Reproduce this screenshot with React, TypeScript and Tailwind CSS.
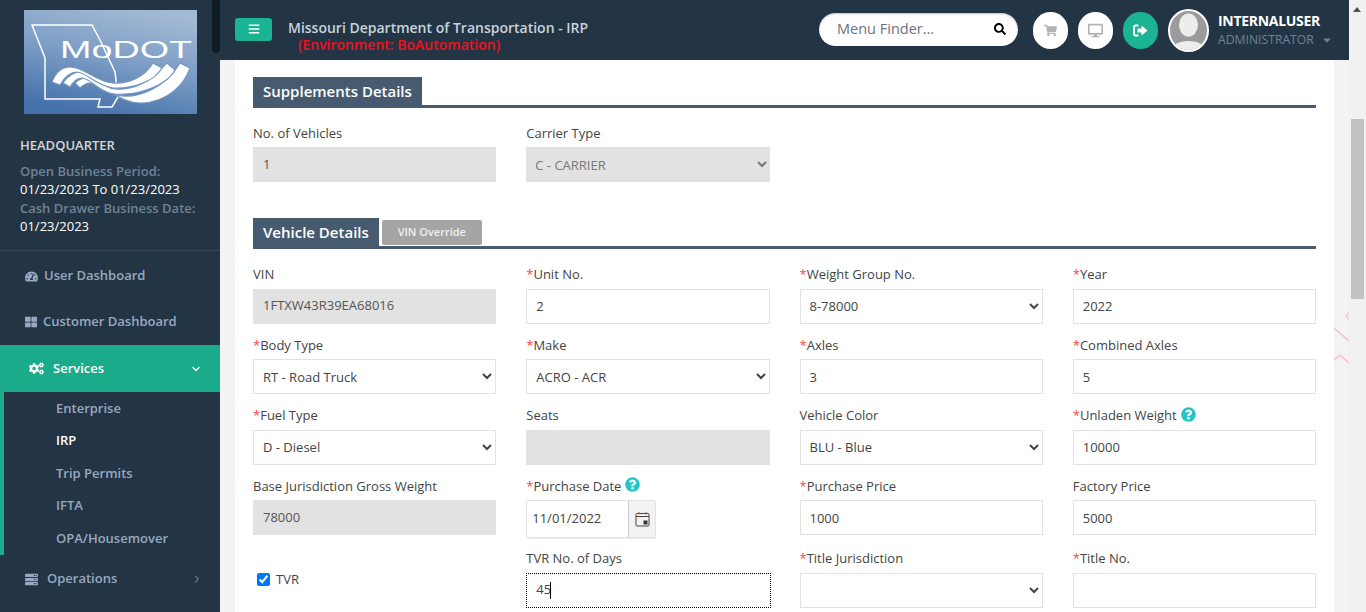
import React from "react";
import { FaBars, FaCaretDown, FaCogs, FaDesktop, FaQuestionCircle, FaSearch, FaServer, FaShoppingCart, FaTachometerAlt, FaThLarge } from "react-icons/fa";
import { ChevronDown, ChevronRight } from "lucide-react";

const font = { fontFamily: '"Open Sans", sans-serif' };

function Logo() {
  const gap = { stroke: "#7295c0", strokeWidth: 1.1 };
  return (
    <svg width="173" height="104" viewBox="0 0 173 104" className="block">
      <defs>
        <linearGradient id="lg" x1="0.75" y1="0" x2="0.4" y2="1">
          <stop offset="0" stopColor="#a3bad4" />
          <stop offset="0.5" stopColor="#7c9dc5" />
          <stop offset="1" stopColor="#4672ab" />
        </linearGradient>
      </defs>
      <rect width="173" height="104" fill="url(#lg)" />
      <path d="M8 15 H68 L76 30 L91 62 L94 87 L88 97 H74 L76 89 H21 V48 Z" fill="none" stroke="#fff" strokeWidth="1.5" />
      <text x="36" y="48" fill="#fff" fontFamily="Liberation Sans, sans-serif" fontSize="24" textLength="132" lengthAdjust="spacingAndGlyphs">MoDOT</text>
      <path d="M51 73 C54 70 58 68 63 68 C72 68 80 84 93 85 C112 90 142 78 156 53 L166 58 C160 76 142 92 118 93 C96 94 78 73 66 73 C62 73 59 75 56 78 Z" fill="#fff" {...gap} />
      <path d="M39 73 C44 66 50 62 56 62 C68 62 78 78 91 79 C110 81 126 72 143 53 L151 60 C144 74 116 86 91 84 C76 83 66 68 58 68 C53 68 49 72 46 77 Z" fill="#fff" {...gap} />
      <path d="M28 72 C32 62 38 57 46 57 C60 57 72 72 89 73 C104 74 120 68 129 53 L138 58 C130 72 108 79 89 78 C72 76 62 62 53 62 C46 62 40 68 36 75 Z" fill="#fff" {...gap} />
    </svg>
  );
}

function Avatar() {
  return (
    <svg width="41" height="43" viewBox="0 0 41 43" className="block">
      <defs>
        <clipPath id="av"><ellipse cx="20.5" cy="21.5" rx="18.5" ry="19.5" /></clipPath>
      </defs>
      <ellipse cx="20.5" cy="21.5" rx="19.5" ry="20.5" fill="#9b9b9b" stroke="#fff" strokeWidth="2" />
      <g clipPath="url(#av)">
        <ellipse cx="20.5" cy="16" rx="9.5" ry="11.5" fill="#ededed" />
        <ellipse cx="20.5" cy="42" rx="18" ry="10" fill="#ededed" />
      </g>
    </svg>
  );
}

function SignOutIcon() {
  return (
    <svg width="15" height="13" viewBox="0 0 15 13" fill="#fff" className="block">
      <path d="M5.5 0.5 H2.5 C1 0.5 0 1.5 0 3 V10 C0 11.5 1 12.5 2.5 12.5 H5.5 V10.5 H3 C2.4 10.5 2 10.1 2 9.5 V3.5 C2 2.9 2.4 2.5 3 2.5 H5.5 Z" />
      <path d="M4.5 4.5 H8.5 V1.5 L14.5 6.5 L8.5 11.5 V8.5 H4.5 Z" />
    </svg>
  );
}

function CalendarIcon() {
  return (
    <svg width="15" height="16" viewBox="0 0 15 16" fill="none" className="block">
      <rect x="1" y="2.5" width="13" height="12.5" rx="1" stroke="#444" strokeWidth="1" />
      <path d="M1 5.5 H14" stroke="#444" strokeWidth="1" />
      <path d="M4 1 V3.5 M11 1 V3.5" stroke="#a06a2c" strokeWidth="1" />
      <rect x="8.5" y="9.5" width="4" height="4" fill="#333" />
    </svg>
  );
}

const inputBase = "w-full h-[35px] border border-[#e2e2e2] bg-white px-[9px] text-[13px] text-[#444] outline-none";
const disabledBase = "w-full h-[35px] bg-[#e2e2e2] px-[10px] flex items-center text-[13px] text-[#555]";

function Label({ text, req, help }: { text: string; req?: boolean; help?: boolean }) {
  return (
    <div className="h-[20px] mb-[4.5px] flex items-center text-[13px] leading-[20px] text-[#444]">
      {req && <span className="text-[#f44]">*</span>}
      <span>{text}</span>
      {help && <FaQuestionCircle className="ml-[4px] -mt-[2px] text-[15px] text-[#23c6c8]" />}
    </div>
  );
}

function Field({ label, req, help, value, kind = "input", className = "" }: { label: string; req?: boolean; help?: boolean; value: string; kind?: "input" | "select" | "disabled"; className?: string }) {
  return (
    <div className={"pt-[11px] " + className}>
      <Label text={label} req={req} help={help} />
      {kind === "disabled" && <div className={disabledBase}>{value}</div>}
      {kind === "input" && <input readOnly value={value} className={inputBase} />}
      {kind === "select" && (
        <select defaultValue={value} className="w-full h-[35px] border border-[#e2e2e2] bg-white px-[5px] text-[13px] text-[#444] outline-none">
          <option>{value}</option>
        </select>
      )}
    </div>
  );
}

function SectionTitle({ title, children }: { title: string; children?: React.ReactNode }) {
  return (
    <div className="flex items-end border-b-[3px] border-[#475b70] h-[31px]">
      <div className="h-[28px] px-[10px] pt-[1px] flex items-center bg-[#475b70] text-white text-[15px] font-semibold">{title}</div>
      {children}
    </div>
  );
}

function NavItem({ icon, label, gap, chevron }: { icon: React.ReactNode; label: string; gap: string; chevron?: boolean }) {
  return (
    <div className="h-[46px] flex items-center pl-[25px] pr-[17px] text-[13px] font-semibold text-[#98a8c0]">
      <span className={"flex " + gap}>{icon}</span>
      <span>{label}</span>
      {chevron && <ChevronRight size={12} strokeWidth={2} className="ml-auto" />}
    </div>
  );
}

function SubItem({ label, active }: { label: string; active?: boolean }) {
  return (
    <div className={"h-[32.5px] flex items-center pl-[52px] text-[13px] font-semibold " + (active ? "text-white" : "text-[#98a8c0]")}>{label}</div>
  );
}

export default function App() {
  return (
    <div style={font} className="relative flex w-[1366px] h-[612px] overflow-hidden bg-[#f3f3f3]">
      <aside className="relative w-[220px] shrink-0 h-full bg-[#233545] overflow-hidden">
        <div className="pt-[10px] pl-[24px]"><Logo /></div>
        <div className="px-[20px] pt-[18.5px] h-[137px] border-b border-[#34475a] text-[13px] leading-[18.5px]">
          <div className="font-semibold text-[#d6d6d6] h-[26px] flex items-center mb-[3px] text-[13px]">HEADQUARTER</div>
          <div className="font-semibold text-[#6f8296]">Open Business Period:</div>
          <div className="text-white">01/23/2023 To 01/23/2023</div>
          <div className="font-semibold text-[#6f8296]">Cash Drawer Business Date:</div>
          <div className="text-white">01/23/2023</div>
        </div>
        <div className="mt-[2px]">
          <NavItem icon={<FaTachometerAlt className="text-[13px]" />} label="User Dashboard" gap="mr-[6px]" />
          <NavItem icon={<FaThLarge className="text-[12px]" />} label="Customer Dashboard" gap="mr-[6px]" />
        </div>
        <div className="h-[47px] flex items-center pl-[29px] pr-[18px] bg-[#1aab8b] text-white text-[13px] font-semibold">
          <FaCogs className="text-[15px] mr-[9px]" />
          <span>Services</span>
          <ChevronDown size={12} strokeWidth={2.5} className="ml-auto" />
        </div>
        <div className="border-l-[4px] border-[#1aab8b] h-[163px]">
          <SubItem label="Enterprise" />
          <SubItem label="IRP" active />
          <SubItem label="Trip Permits" />
          <SubItem label="IFTA" />
          <SubItem label="OPA/Housemover" />
        </div>
        <div className="mt-[1px]">
          <NavItem icon={<FaServer className="text-[13px]" />} label="Operations" gap="mr-[9px]" chevron />
        </div>
        <div className="absolute right-0 top-0 w-[8px] h-[53px] rounded-b-[4px] bg-[#111c26]" />
      </aside>

      <div className="w-[1129px] shrink-0 h-full flex flex-col">
        <header className="h-[60px] shrink-0 bg-[#233545] flex items-center">
          <button className="ml-[15px] w-[37px] h-[23px] mb-[2px] rounded-[3px] bg-[#1ab394] flex items-center justify-center">
            <FaBars className="text-white text-[12px]" />
          </button>
          <div className="ml-[16px] w-[531px] pt-[11px]">
            <div className="text-[14px] leading-[17px] font-semibold text-[#c9d2da]">Missouri Department of Transportation - IRP</div>
            <div className="pl-[10px] text-[14px] leading-[17px] font-semibold text-[#f0101c]">(Environment: BoAutomation)</div>
          </div>
          <div className="w-[199px] h-[33px] mb-[2px] rounded-full bg-white flex items-center pl-[18px] pr-[12px] shadow-[inset_0_1px_2px_rgba(0,0,0,0.25)]">
            <span className="text-[14.5px] text-[#6b7280]">Menu Finder...</span>
            <FaSearch className="ml-auto text-[12px] text-black" />
          </div>
          <div className="ml-[15px] w-[35px] h-[37px] rounded-full bg-white flex items-center justify-center">
            <FaShoppingCart className="text-[13px] text-[#b3b3b3]" />
          </div>
          <div className="ml-[10px] w-[35px] h-[37px] rounded-full bg-white flex items-center justify-center">
            <FaDesktop className="text-[15px] text-[#b3b3b3]" />
          </div>
          <div className="ml-[10px] w-[35px] h-[37px] rounded-full bg-[#1ab394] flex items-center justify-center">
            <SignOutIcon />
          </div>
          <div className="ml-[10px]"><Avatar /></div>
          <div className="ml-[9px] w-[122px]">
            <div className="text-[14px] leading-[19px] font-bold text-white tracking-[-0.3px]">INTERNALUSER</div>
            <div className="flex items-center text-[12.2px] leading-[19px] text-[#6f8296]">
              ADMINISTRATOR
              <FaCaretDown className="ml-[7px] text-[12px]" />
            </div>
          </div>
        </header>

        <div className="flex-1 ml-[15px] mr-[15px] bg-white px-[18px] pt-[17px] overflow-hidden">
          <SectionTitle title="Supplements Details" />
          <div className="grid grid-cols-4 gap-x-[30px] mt-[3.5px]">
            <Field label="No. of Vehicles" value="1" kind="disabled" />
            <div className="pt-[11px]">
              <Label text="Carrier Type" />
              <select disabled defaultValue="C - CARRIER" className="w-full h-[35px] bg-[#e2e2e2] px-[5px] text-[13px] text-[#777] outline-none opacity-100">
                <option>C - CARRIER</option>
              </select>
            </div>
          </div>
          <div className="mt-[36px]">
            <SectionTitle title="Vehicle Details">
              <div className="ml-[3px] mb-[1px] w-[100px] h-[25px] rounded-[2px] bg-[#a5a5a5] flex items-center justify-center text-[11px] font-semibold text-[#f0f0f0]">VIN Override</div>
            </SectionTitle>
          </div>
          <div className="grid grid-cols-4 gap-x-[30px] mt-[4px]">
            <Field label="VIN" value="1FTXW43R39EA68016" kind="disabled" />
            <Field label="Unit No." req value="2" />
            <Field label="Weight Group No." req value="8-78000" kind="select" />
            <Field label="Year" req value="2022" />

            <Field label="Body Type" req value="RT - Road Truck" kind="select" />
            <Field label="Make" req value="ACRO - ACR" kind="select" />
            <Field label="Axles" req value="3" />
            <Field label="Combined Axles" req value="5" />

            <Field label="Fuel Type" req value="D - Diesel" kind="select" />
            <Field label="Seats" value="" kind="disabled" />
            <Field label="Vehicle Color" value="BLU - Blue" kind="select" />
            <Field label="Unladen Weight" req help value="10000" />

            <Field label="Base Jurisdiction Gross Weight" value="78000" kind="disabled" />
            <div className="pt-[11px]">
              <Label text="Purchase Date" req help />
              <div className="flex w-[130px] h-[38px] rounded-[2px] border border-[#e2e2e2] shadow-[0_1px_1px_rgba(0,0,0,0.08)]">
                <div className="flex-1 flex items-center pl-[5px] text-[13px] text-[#444]">11/01/2022</div>
                <div className="w-[27px] border-l border-[#ccc] bg-[#f3f3f3] flex items-center justify-center"><CalendarIcon /></div>
              </div>
            </div>
            <Field label="Purchase Price" req value="1000" />
            <Field label="Factory Price" value="5000" />

            <div className="-mt-[1px] flex items-center pt-[14px] h-[70.5px]">
              <label className="flex items-center ml-[4px] text-[13px] text-[#444]">
                <input type="checkbox" defaultChecked className="w-[13px] h-[13px] mr-[6px] accent-[#0075ff]" />
                TVR
              </label>
            </div>
            <div className="-mt-[1px] pt-[11px]">
              <Label text="TVR No. of Days" />
              <div className="relative w-[245px] h-[35px] border border-dotted border-black flex items-center pl-[9px] text-[13px] text-[#444]">
                <span>45</span>
                <span className="w-px h-[17px] bg-black -ml-[1px]" />
              </div>
            </div>
            <Field label="Title Jurisdiction" req value="" kind="select" className="-mt-[1px]" />
            <Field label="Title No." req value="" className="-mt-[1px]" />
          </div>
        </div>
      </div>

      <div className="flex-1 h-full bg-[#f1f1f1] relative">
        <div className="absolute left-[4px] top-[7px] w-0 h-0 border-x-[4px] border-x-transparent border-b-[5px] border-b-[#505050]" />
        <div className="absolute left-[2px] right-[2px] top-[119px] h-[180px] bg-[#c1c1c1]" />
      </div>

      <svg className="absolute left-[1334px] top-[310px]" width="15" height="55" viewBox="0 0 15 55" fill="none" stroke="#ffb6c1" strokeWidth="1.2">
        <path d="M15 3 L12 6 L15 10" />
        <path d="M0 18 L15 31" />
        <path d="M0 50 L6 45 L15 53" />
      </svg>
    </div>
  );
}
